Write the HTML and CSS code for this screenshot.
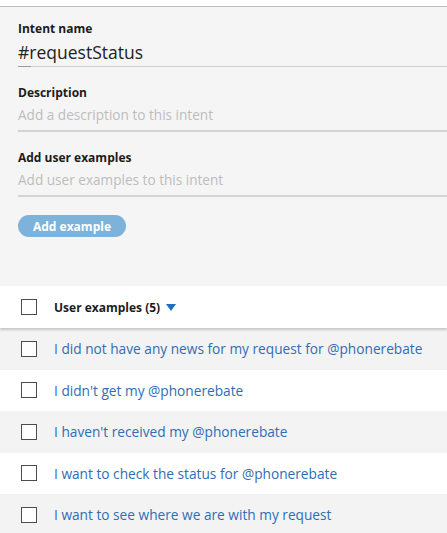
FILE: index.html
```html
<!DOCTYPE html>
<html>
<head>
<meta charset="utf-8">
<link rel="stylesheet" href="styles.css">
</head>
<body>
<div class="panel">
  <div class="field">
    <div class="label">Intent name</div>
    <div class="input title">#requestStatus</div>
  </div>
  <div class="field">
    <div class="label">Description</div>
    <div class="input placeholder">Add a description to this intent</div>
  </div>
  <div class="field">
    <div class="label">Add user examples</div>
    <div class="input placeholder">Add user examples to this intent</div>
  </div>
  <button class="btn">Add example</button>
</div>
<div class="list">
  <div class="row header">
    <span class="box"></span>
    <span class="head-text">User examples (5)</span>
    <svg class="tri" width="10" height="7" viewBox="0 0 10 7"><path d="M0 0 H10 L5 7 Z" fill="#1f6fc0"/></svg>
  </div>
  <div class="row alt"><span class="box"></span><span class="ex">I did not have any news for my request for @phonerebate</span></div>
  <div class="row"><span class="box"></span><span class="ex">I didn't get my @phonerebate</span></div>
  <div class="row alt"><span class="box"></span><span class="ex">I haven't received my @phonerebate</span></div>
  <div class="row"><span class="box"></span><span class="ex">I want to check the status for @phonerebate</span></div>
  <div class="row alt"><span class="box"></span><span class="ex">I want to see where we are with my request</span></div>
</div>
</body>
</html>
```
FILE: styles.css
```css
html, body {
  margin: 0;
  padding: 0;
  background: #fff;
  font-family: "Open Sans", "Noto Sans", sans-serif;
}
body { overflow: hidden; }
.panel {
  margin-top: 6px;
  border-top: 1px solid #bcbcbc;
  background: #f5f5f5;
  padding: 14px 0 49px 18px;
}
.field { margin-bottom: 18px; }
.label {
  font-size: 12px;
  line-height: 16px;
  font-weight: 700;
  color: #1c1c1c;
}
.input {
  position: relative;
}
.title {
  margin-top: 3px;
  font-size: 17.5px;
  line-height: 24px;
  color: #222;
  padding-bottom: 2px;
  border-bottom: 1px solid #cdcdcd;
}
.title::after {
  content: "";
  position: absolute;
  left: 0;
  bottom: -1px;
  width: 13px;
  height: 1px;
  background: #9a9a9a;
}
.placeholder {
  margin-top: 4px;
  font-size: 13.6px;
  line-height: 20px;
  color: #bdbdbd;
  padding-bottom: 5px;
  border-bottom: 2px solid #d4d4d4;
}
.btn {
  display: block;
  margin-top: 1px;
  width: 108px;
  height: 22px;
  border: none;
  border-radius: 11px;
  background: #7db3da;
  color: #fff;
  font-family: inherit;
  font-size: 12px;
  font-weight: 700;
  padding: 0;
}
.list { background: #fff; }
.row {
  display: flex;
  align-items: center;
  height: 41.5px;
  padding-left: 21px;
}
.row.alt { background: #f3f3f3; }
.header {
  height: 42px;
  background: #fff;
  box-shadow: 0 2px 2px rgba(0,0,0,0.18);
  position: relative;
}
.box {
  width: 14px;
  height: 14px;
  border: 1px solid #4d4d4d;
  background: #fff;
  flex: none;
}
.head-text {
  margin-left: 17px;
  font-size: 12px;
  font-weight: 700;
  color: #1c1c1c;
}
.tri { margin-left: 6px; }
.ex {
  margin-left: 17px;
  font-size: 13.7px;
  color: #2f6db4;
  white-space: nowrap;
}
```
